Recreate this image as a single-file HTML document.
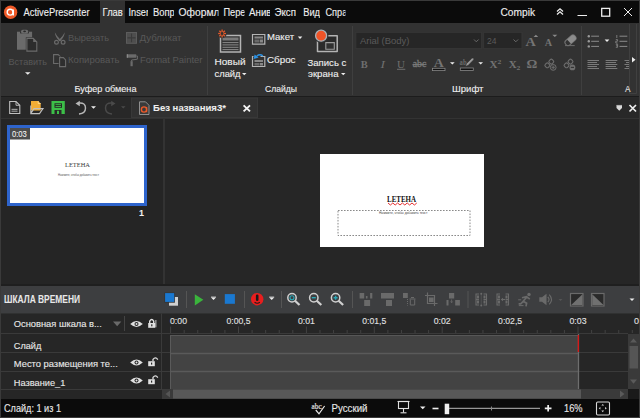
<!DOCTYPE html>
<html><head><meta charset="utf-8">
<style>
*{margin:0;padding:0}
html,body{width:640px;height:418px;overflow:hidden;background:#3a3a3a}
svg{display:block;font-family:"Liberation Sans",sans-serif}
</style></head><body>
<svg width="640" height="418" viewBox="0 0 640 418">
<rect x="0" y="0" width="640" height="418" fill="#3a3a3a" />
<rect x="1" y="1" width="638" height="22" fill="#0b0b0b" />
<rect x="100" y="1" width="25" height="22" fill="#323232" />
<circle cx="10.6" cy="12.3" r="6.7" fill="#ef5a29"/>
<circle cx="10.1" cy="12.2" r="2.9" fill="none" stroke="#fff" stroke-width="1.4"/>
<line x1="13.3" y1="9.5" x2="13.3" y2="15.6" stroke="#fff" stroke-width="1.4" />
<text x="23.5" y="16.0" font-size="10" fill="#eeeeee" textLength="66" lengthAdjust="spacingAndGlyphs" stroke="#eeeeee" stroke-width="0.12" >ActivePresenter</text>
<clipPath id="c1"><rect x="101" y="1" width="23" height="22"/></clipPath>
<text x="102.6" y="16.0" font-size="10" fill="#eeeeee" textLength="20.2" lengthAdjust="spacingAndGlyphs" stroke="#eeeeee" stroke-width="0.12" clip-path="url(#c1)">Глав</text>
<clipPath id="ct0"><rect x="127.5" y="1" width="20.5" height="22"/></clipPath>
<text x="128.5" y="16.0" font-size="10" fill="#eeeeee" textLength="20.5" lengthAdjust="spacingAndGlyphs" stroke="#eeeeee" stroke-width="0.12" clip-path="url(#ct0)">Inser</text>
<clipPath id="ct1"><rect x="152" y="1" width="22" height="22"/></clipPath>
<text x="153" y="16.0" font-size="10" fill="#eeeeee" textLength="21.8" lengthAdjust="spacingAndGlyphs" stroke="#eeeeee" stroke-width="0.12" clip-path="url(#ct1)">Вопр</text>
<clipPath id="ct2"><rect x="177.5" y="1" width="41.0" height="22"/></clipPath>
<text x="178.5" y="16.0" font-size="10" fill="#eeeeee" textLength="41" lengthAdjust="spacingAndGlyphs" stroke="#eeeeee" stroke-width="0.12" clip-path="url(#ct2)">Оформл</text>
<clipPath id="ct3"><rect x="222.5" y="1" width="22.0" height="22"/></clipPath>
<text x="223.5" y="16.0" font-size="10" fill="#eeeeee" textLength="22" lengthAdjust="spacingAndGlyphs" stroke="#eeeeee" stroke-width="0.12" clip-path="url(#ct3)">Пере</text>
<clipPath id="ct4"><rect x="248" y="1" width="22" height="22"/></clipPath>
<text x="249" y="16.0" font-size="10" fill="#eeeeee" textLength="22.5" lengthAdjust="spacingAndGlyphs" stroke="#eeeeee" stroke-width="0.12" clip-path="url(#ct4)">Анив</text>
<clipPath id="ct5"><rect x="273.5" y="1" width="22.5" height="22"/></clipPath>
<text x="274.5" y="16.0" font-size="10" fill="#eeeeee" textLength="21.5" lengthAdjust="spacingAndGlyphs" stroke="#eeeeee" stroke-width="0.12" clip-path="url(#ct5)">Эксп</text>
<clipPath id="ct6"><rect x="302.2" y="1" width="17.80000000000001" height="22"/></clipPath>
<text x="303.2" y="16.0" font-size="10" fill="#eeeeee" textLength="16.8" lengthAdjust="spacingAndGlyphs" stroke="#eeeeee" stroke-width="0.12" clip-path="url(#ct6)">Вид</text>
<clipPath id="ct7"><rect x="324.5" y="1" width="21.0" height="22"/></clipPath>
<text x="325.5" y="16.0" font-size="10" fill="#eeeeee" textLength="21.8" lengthAdjust="spacingAndGlyphs" stroke="#eeeeee" stroke-width="0.12" clip-path="url(#ct7)">Спра</text>
<text x="500.5" y="16.0" font-size="10" fill="#eeeeee" textLength="34.5" lengthAdjust="spacingAndGlyphs" stroke="#eeeeee" stroke-width="0.12" >Compik</text>
<path d="M557 11.6 L560 8.8 L563 11.6 M557 14.6 L560 11.8 L563 14.6" fill="none" stroke="#eeeeee" stroke-width="1.3" />
<line x1="577.5" y1="15.5" x2="587" y2="15.5" stroke="#eeeeee" stroke-width="1" />
<rect x="601.7" y="8.4" width="8" height="7.8" fill="none" stroke="#eeeeee" stroke-width="1.3"/>
<path d="M624 8 L632 16 M632 8 L624 16" fill="none" stroke="#eeeeee" stroke-width="1" />
<rect x="1" y="23" width="638" height="74" fill="#323232" />
<rect x="17" y="31.7" width="15.1" height="18" fill="#6b6b6b" />
<rect x="20" y="31.2" width="9" height="2.2" fill="#323232" />
<rect x="21" y="29.8" width="7.2" height="3.8" fill="#6b6b6b" rx="1.8"/>
<ellipse cx="24.6" cy="31.4" rx="1.4" ry="0.8" fill="#2a2a2a"/>
<path d="M25.8 37.3 H33.6 L37.8 41.5 V52.2 H25.8 Z" fill="#323232" stroke="none" stroke-width="1" />
<path d="M26.9 38.4 H33.2 L36.8 42 V51.1 H26.9 Z" fill="#2c2c2c" stroke="#6b6b6b" stroke-width="1.1" />
<path d="M33.2 38.4 V42 H36.8 Z" fill="#6b6b6b" stroke="none" stroke-width="1" />
<text x="8.5" y="64.6" font-size="9.6" fill="#585858" textLength="38.5" lengthAdjust="spacingAndGlyphs" >Вставить</text>
<path d="M25 72.2 H30.5 L27.75 74.8 Z" fill="#eeeeee" stroke="none" stroke-width="1" />
<path d="M54.8 32.3 Q56.8 36.5 61 40.3 L59.6 41.2 Q55.3 37.5 54.8 32.3 Z" fill="#6b6b6b" stroke="none" stroke-width="1" />
<path d="M64.8 32.3 Q62.8 36.5 58.6 40.3 L60 41.2 Q64.3 37.5 64.8 32.3 Z" fill="#6b6b6b" stroke="none" stroke-width="1" />
<circle cx="56.5" cy="42.2" r="1.9" fill="none" stroke="#6b6b6b" stroke-width="1.2"/>
<circle cx="63.1" cy="42.2" r="1.9" fill="none" stroke="#6b6b6b" stroke-width="1.2"/>
<text x="68" y="41.0" font-size="9.6" fill="#585858" textLength="41" lengthAdjust="spacingAndGlyphs" >Вырезать</text>
<path d="M53.6 54.6 H58.2 L60.8 57.2 V63.5 H53.6 Z" fill="#323232" stroke="#6b6b6b" stroke-width="1.1" />
<path d="M58.6 56.6 H64.2 L66.4 59.4 V67.6 H58.6 Z" fill="#323232" stroke="none" stroke-width="1" />
<path d="M59.6 57.6 H63.4 L65.6 60 V66.6 H59.6 Z" fill="#2e2e2e" stroke="#6b6b6b" stroke-width="1.1" />
<text x="68" y="63.2" font-size="9.6" fill="#585858" textLength="51.5" lengthAdjust="spacingAndGlyphs" >Копировать</text>
<rect x="126.5" y="32.5" width="10" height="10.8" fill="#4e4e4e" stroke="#5c5c5c" stroke-width="1"/>
<path d="M131.5 33.5 V42.3 M127.5 37.9 H135.5" fill="none" stroke="#3a3a3a" stroke-width="1.1" />
<text x="139.5" y="40.9" font-size="9.6" fill="#585858" textLength="42" lengthAdjust="spacingAndGlyphs" >Дубликат</text>
<rect x="126.8" y="54.3" width="9.4" height="3.4" fill="#6b6b6b" />
<rect x="126.8" y="54.3" width="1.2" height="3.4" fill="#8a8a8a" />
<path d="M136.2 56 H137.4 V59.2 L131.6 60 V61.5" fill="none" stroke="#6b6b6b" stroke-width="1" />
<rect x="130.5" y="61.2" width="2.2" height="5" fill="#6b6b6b" />
<text x="140" y="63.4" font-size="9.6" fill="#585858" textLength="62.5" lengthAdjust="spacingAndGlyphs" >Format Painter</text>
<text x="74.5" y="92.1" font-size="9.6" fill="#eeeeee" textLength="62" lengthAdjust="spacingAndGlyphs" stroke="#eeeeee" stroke-width="0.12" >Буфер обмена</text>
<line x1="207.5" y1="26" x2="207.5" y2="95" stroke="#3f3f3f" stroke-width="1" />
<line x1="352.5" y1="26" x2="352.5" y2="95" stroke="#3f3f3f" stroke-width="1" />
<line x1="581.5" y1="26" x2="581.5" y2="95" stroke="#3f3f3f" stroke-width="1" />
<path d="M220.5 35.5 H240.5 V52 H220.5 Z" fill="#323232" stroke="#b4b4b4" stroke-width="1.5" />
<rect x="222.5" y="37.5" width="16" height="3" fill="#7a7a7a" />
<line x1="222.5" y1="42.6" x2="238.5" y2="42.6" stroke="#8a8a8a" stroke-width="1" />
<line x1="222.5" y1="44.9" x2="238.5" y2="44.9" stroke="#8a8a8a" stroke-width="1" />
<line x1="222.5" y1="47.3" x2="238.5" y2="47.3" stroke="#8a8a8a" stroke-width="1" />
<line x1="222.5" y1="49.6" x2="238.5" y2="49.6" stroke="#8a8a8a" stroke-width="1" />
<circle cx="222.1" cy="33.5" r="4.6" fill="#323232"/>
<line x1="223.5" y1="33.5" x2="226.0" y2="33.5" stroke="#e45a2b" stroke-width="1.3" />
<line x1="223.09" y1="34.49" x2="224.86" y2="36.26" stroke="#e45a2b" stroke-width="1.3" />
<line x1="222.1" y1="34.9" x2="222.1" y2="37.4" stroke="#e45a2b" stroke-width="1.3" />
<line x1="221.11" y1="34.49" x2="219.34" y2="36.26" stroke="#e45a2b" stroke-width="1.3" />
<line x1="220.7" y1="33.5" x2="218.2" y2="33.5" stroke="#e45a2b" stroke-width="1.3" />
<line x1="221.11" y1="32.51" x2="219.34" y2="30.74" stroke="#e45a2b" stroke-width="1.3" />
<line x1="222.1" y1="32.1" x2="222.1" y2="29.6" stroke="#e45a2b" stroke-width="1.3" />
<line x1="223.09" y1="32.51" x2="224.86" y2="30.74" stroke="#e45a2b" stroke-width="1.3" />
<text x="214.5" y="65.4" font-size="9.6" fill="#eeeeee" textLength="31" lengthAdjust="spacingAndGlyphs" stroke="#eeeeee" stroke-width="0.12" >Новый</text>
<text x="214.5" y="76.7" font-size="9.6" fill="#eeeeee" textLength="26" lengthAdjust="spacingAndGlyphs" stroke="#eeeeee" stroke-width="0.12" >слайд</text>
<path d="M242 73 H246.5 L244.25 75.2 Z" fill="#eeeeee" stroke="none" stroke-width="1" />
<path d="M252.5 34.5 H264.8 V44.2 H252.5 Z" fill="#323232" stroke="#b4b4b4" stroke-width="1.2" />
<rect x="254.5" y="36.5" width="8.5" height="2" fill="#888" />
<rect x="254.5" y="39.5" width="5" height="3" fill="#6a6a6a" />
<rect x="260" y="39.5" width="3" height="3" fill="#888" />
<text x="267" y="40.3" font-size="9.6" fill="#eeeeee" textLength="27" lengthAdjust="spacingAndGlyphs" stroke="#eeeeee" stroke-width="0.12" >Макет</text>
<path d="M297.8 36.6 H302.3 L300.05 38.9 Z" fill="#eeeeee" stroke="none" stroke-width="1" />
<path d="M252.5 56.5 H264.8 V66.5 H252.5 Z" fill="#323232" stroke="#b4b4b4" stroke-width="1.2" />
<rect x="254.5" y="60" width="8.5" height="2" fill="#888" />
<rect x="254.5" y="63" width="5" height="2.5" fill="#6a6a6a" />
<rect x="260" y="63" width="3" height="2.5" fill="#888" />
<line x1="253.5" y1="56.5" x2="260.5" y2="56.5" stroke="#323232" stroke-width="2" />
<path d="M262.8 55.8 Q260 53.6 256.8 56" fill="none" stroke="#2b93e6" stroke-width="1.5" />
<path d="M253.6 59 L254.6 54.6 L258.6 57.6 Z" fill="#2b93e6" stroke="none" stroke-width="1" />
<text x="267" y="63.4" font-size="9.6" fill="#eeeeee" textLength="28.5" lengthAdjust="spacingAndGlyphs" stroke="#eeeeee" stroke-width="0.12" >Сброс</text>
<text x="265" y="91.9" font-size="9.6" fill="#eeeeee" textLength="32" lengthAdjust="spacingAndGlyphs" stroke="#eeeeee" stroke-width="0.12" >Слайды</text>
<path d="M317.5 35.8 H337.2 V51.5 H317.5 Z" fill="#2a2a2a" stroke="#b4b4b4" stroke-width="1.5" stroke-linejoin="round"/>
<path d="M325.8 42.6 H334.3 V49.2 H325.8 Z" fill="#303030" stroke="#9a9a9a" stroke-width="1.1" />
<circle cx="321.1" cy="35.7" r="7.3" fill="#323232"/>
<circle cx="321.1" cy="35.7" r="5.5" fill="#ef5428" stroke="#a8b4ba" stroke-width="1.3"/>
<text x="307.5" y="65.7" font-size="9.6" fill="#eeeeee" textLength="38.8" lengthAdjust="spacingAndGlyphs" stroke="#eeeeee" stroke-width="0.12" >Запись с</text>
<text x="308" y="76.7" font-size="9.6" fill="#eeeeee" textLength="30.5" lengthAdjust="spacingAndGlyphs" stroke="#eeeeee" stroke-width="0.12" >экрана</text>
<path d="M341 73 H345.5 L343.25 75.2 Z" fill="#eeeeee" stroke="none" stroke-width="1" />
<rect x="355.8" y="32.3" width="125.8" height="16.3" fill="#262626" stroke="#363636" stroke-width="1"/>
<text x="360" y="43.7" font-size="9.6" fill="#5a5a5a" textLength="49.5" lengthAdjust="spacingAndGlyphs" >Arial (Body)</text>
<path d="M474 39.5 L476.3 41.8 L478.6 39.5" fill="none" stroke="#6a6a6a" stroke-width="1" />
<rect x="483.6" y="32.3" width="38.4" height="16.3" fill="#262626" stroke="#363636" stroke-width="1"/>
<text x="487" y="43.7" font-size="9.6" fill="#5a5a5a" textLength="9.5" lengthAdjust="spacingAndGlyphs" >24</text>
<path d="M513.5 39.5 L515.8 41.8 L518.1 39.5" fill="none" stroke="#6a6a6a" stroke-width="1" />
<text x="525.4" y="45.8" font-size="12.5" fill="#747474" font-weight="700" font-family="Liberation Serif" textLength="10.3" lengthAdjust="spacingAndGlyphs" >A</text>
<path d="M533.6 37.1 L535.9 34.8 L538.2 37.1 Z" fill="#8a8a8a" stroke="none" stroke-width="1" />
<text x="544.8" y="45.8" font-size="9.5" fill="#747474" font-weight="700" font-family="Liberation Serif" textLength="7.4" lengthAdjust="spacingAndGlyphs" >A</text>
<path d="M552.3 34.7 H557.3 L554.8 37.1 Z" fill="#8a8a8a" stroke="none" stroke-width="1" />
<g transform="rotate(-42 570.5 40.3)"><rect x="564.3" y="37.3" width="12.4" height="6" rx="2.6" fill="none" stroke="#6e6e6e" stroke-width="1.1"/><path d="M568.5 37.3 H574.1 Q576.7 37.3 576.7 40.3 Q576.7 43.3 574.1 43.3 H568.5 Z" fill="#8c8c8c"/></g>
<line x1="565" y1="45.6" x2="574.7" y2="45.6" stroke="#6e6e6e" stroke-width="1" />
<text x="360.8" y="67.8" font-size="10" fill="#6e6e6e" font-weight="700" font-family="Liberation Serif" textLength="7" lengthAdjust="spacingAndGlyphs" >B</text>
<text x="380.5" y="67.8" font-size="10" fill="#6e6e6e" font-family="Liberation Serif" textLength="4.5" lengthAdjust="spacingAndGlyphs" font-style="italic">I</text>
<text x="397" y="67.5" font-size="10" fill="#6e6e6e" font-family="Liberation Serif" textLength="8" lengthAdjust="spacingAndGlyphs" >U</text>
<line x1="397" y1="69.3" x2="405.3" y2="69.3" stroke="#6e6e6e" stroke-width="1" />
<text x="412.8" y="67.4" font-size="9.5" fill="#7a7a7a" font-family="Liberation Serif" textLength="13.5" lengthAdjust="spacingAndGlyphs" stroke="#7a7a7a" stroke-width="0.3">abc</text>
<line x1="412.5" y1="64.6" x2="426.5" y2="64.6" stroke="#7a7a7a" stroke-width="1.1" />
<text x="433.8" y="66.8" font-size="12.5" fill="#747474" font-weight="700" font-family="Liberation Serif" textLength="10" lengthAdjust="spacingAndGlyphs" >A</text>
<rect x="432.5" y="68.3" width="12.5" height="2.3" fill="#111" stroke="#888" stroke-width="0.8"/>
<path d="M450 62.2 H454.7 L452.35 64.5 Z" fill="#eeeeee" stroke="none" stroke-width="1" />
<text x="459.6" y="64.8" font-size="8" fill="#6a6a6a" font-weight="700" font-family="Liberation Serif" textLength="7" lengthAdjust="spacingAndGlyphs" >ab</text>
<path d="M465.5 66.5 L466.3 63.8 L471.8 58.3 Q472.8 57.5 473.6 58.3 Q474.3 59.1 473.5 60 L468 65.6 Z" fill="#9a9a9a" stroke="#2a2a2a" stroke-width="0.6" />
<rect x="460.3" y="68" width="13" height="2.5" fill="#111" stroke="#888" stroke-width="0.8"/>
<path d="M478.4 62.2 H483 L480.7 64.5 Z" fill="#eeeeee" stroke="none" stroke-width="1" />
<text x="489.5" y="68" font-size="10.5" fill="#727272" font-weight="700" font-family="Liberation Serif" textLength="8" lengthAdjust="spacingAndGlyphs" >X</text>
<text x="497.6" y="63.6" font-size="6.5" fill="#727272" font-weight="700" font-family="Liberation Serif" textLength="3.8" lengthAdjust="spacingAndGlyphs" >2</text>
<text x="508.8" y="68" font-size="10.5" fill="#727272" font-weight="700" font-family="Liberation Serif" textLength="8" lengthAdjust="spacingAndGlyphs" >X</text>
<text x="516.4" y="70.3" font-size="6.5" fill="#727272" font-weight="700" font-family="Liberation Serif" textLength="3.8" lengthAdjust="spacingAndGlyphs" >2</text>
<text x="526.5" y="68" font-size="11.5" fill="#727272" font-weight="700" font-family="Liberation Serif" textLength="10.8" lengthAdjust="spacingAndGlyphs" >Ω</text>
<rect x="549.1999999999999" y="59.5" width="4.2" height="4.2" rx="1.4" transform="rotate(45 551.3 61.6)" fill="none" stroke="#6e6e6e" stroke-width="1.1"/>
<rect x="545.1999999999999" y="63.199999999999996" width="4.2" height="4.2" rx="1.4" transform="rotate(45 547.3 65.3)" fill="none" stroke="#6e6e6e" stroke-width="1.1"/>
<circle cx="553.2" cy="67.4" r="2.9" fill="#383838" stroke="#6e6e6e" stroke-width="1"/>
<path d="M551.6 67.4 H554.8 M553.2 65.8 V69" fill="none" stroke="#6e6e6e" stroke-width="0.9" />
<rect x="568.4" y="59.5" width="4.2" height="4.2" rx="1.4" transform="rotate(45 570.5 61.6)" fill="none" stroke="#6e6e6e" stroke-width="1.1"/>
<rect x="564.4" y="63.199999999999996" width="4.2" height="4.2" rx="1.4" transform="rotate(45 566.5 65.3)" fill="none" stroke="#6e6e6e" stroke-width="1.1"/>
<circle cx="572.4000000000001" cy="67.4" r="2.9" fill="#6e6e6e"/>
<line x1="570.8000000000001" y1="67.4" x2="574.0" y2="67.4" stroke="#333" stroke-width="1.1" />
<text x="452" y="91.9" font-size="9.6" fill="#eeeeee" textLength="31.5" lengthAdjust="spacingAndGlyphs" stroke="#eeeeee" stroke-width="0.12" >Шрифт</text>
<circle cx="588.8" cy="36.2" r="1.2" fill="#9a9a9a"/>
<line x1="591.2" y1="36.2" x2="599" y2="36.2" stroke="#8a8a8a" stroke-width="1" />
<circle cx="588.8" cy="41.3" r="1.2" fill="#9a9a9a"/>
<line x1="591.2" y1="41.3" x2="599" y2="41.3" stroke="#8a8a8a" stroke-width="1" />
<circle cx="588.8" cy="46.4" r="1.2" fill="#9a9a9a"/>
<line x1="591.2" y1="46.4" x2="599" y2="46.4" stroke="#8a8a8a" stroke-width="1" />
<path d="M604.6 39.6 H609.4 L607 42 Z" fill="#eeeeee" stroke="none" stroke-width="1" />
<line x1="619.5" y1="36.2" x2="627.3" y2="36.2" stroke="#8a8a8a" stroke-width="1" />
<line x1="619.5" y1="41.3" x2="627.3" y2="41.3" stroke="#8a8a8a" stroke-width="1" />
<line x1="619.5" y1="46.4" x2="627.3" y2="46.4" stroke="#8a8a8a" stroke-width="1" />
<path d="M616.8 35 V38 M615.8 39.6 H617.6 V41.2 H615.8 V43 H617.6 M615.8 44.3 H617.6 V47.3 H615.8 M616 45.8 H617.6" fill="none" stroke="#8a8a8a" stroke-width="0.8" />
<line x1="587.5" y1="60.5" x2="599" y2="60.5" stroke="#7a7a7a" stroke-width="1" />
<line x1="605.6" y1="60.5" x2="617.3" y2="60.5" stroke="#7a7a7a" stroke-width="1" />
<line x1="624.5" y1="60.5" x2="629" y2="60.5" stroke="#7a7a7a" stroke-width="1" />
<line x1="587.5" y1="62.5" x2="597" y2="62.5" stroke="#7a7a7a" stroke-width="1" />
<line x1="605.6" y1="62.5" x2="616" y2="62.5" stroke="#7a7a7a" stroke-width="1" />
<line x1="626" y1="62.5" x2="629" y2="62.5" stroke="#7a7a7a" stroke-width="1" />
<line x1="587.5" y1="64.5" x2="599" y2="64.5" stroke="#7a7a7a" stroke-width="1" />
<line x1="605.6" y1="64.5" x2="617.3" y2="64.5" stroke="#7a7a7a" stroke-width="1" />
<line x1="624.5" y1="64.5" x2="629" y2="64.5" stroke="#7a7a7a" stroke-width="1" />
<line x1="587.5" y1="66.5" x2="597" y2="66.5" stroke="#7a7a7a" stroke-width="1" />
<line x1="605.6" y1="66.5" x2="616" y2="66.5" stroke="#7a7a7a" stroke-width="1" />
<line x1="626" y1="66.5" x2="629" y2="66.5" stroke="#7a7a7a" stroke-width="1" />
<line x1="587.5" y1="68.5" x2="599" y2="68.5" stroke="#7a7a7a" stroke-width="1" />
<line x1="605.6" y1="68.5" x2="617.3" y2="68.5" stroke="#7a7a7a" stroke-width="1" />
<line x1="624.5" y1="68.5" x2="629" y2="68.5" stroke="#7a7a7a" stroke-width="1" />
<path d="M629.5 24 V93.5 H636.5 V24" fill="none" stroke="#404040" stroke-width="1" />
<path d="M632 57 L635.5 59.7 L632 62.4 Z" fill="#eeeeee" stroke="none" stroke-width="1" />
<text x="625" y="91.9" font-size="9.5" fill="#e0e0e0" textLength="5.5" lengthAdjust="spacingAndGlyphs" stroke="#e0e0e0" stroke-width="0.12" >A</text>
<rect x="1" y="96" width="638" height="1.5" fill="#1c1c1c" />
<rect x="1" y="97.5" width="638" height="21" fill="#282828" />
<rect x="131.5" y="98" width="126" height="19.5" fill="#313131" stroke="#383838" stroke-width="1"/>
<line x1="1" y1="118.5" x2="639" y2="118.5" stroke="#333333" stroke-width="1" />
<path d="M9.7 101.5 H16 L19.8 105.3 V113.5 H9.7 Z" fill="none" stroke="#c0c0c0" stroke-width="1.1" />
<path d="M16 101.5 V105.3 H19.8" fill="none" stroke="#c0c0c0" stroke-width="0.9" />
<rect x="11.5" y="108.8" width="6" height="1.2" fill="#9a9a9a" />
<rect x="11.5" y="110.6" width="6" height="1.2" fill="#9a9a9a" />
<path d="M31 101 H38.2 L40.7 103.5 V110.5 H31 Z" fill="#f2ad35" stroke="none" stroke-width="1" />
<path d="M38.2 101 V103.5 H40.7" fill="none" stroke="#ffe0a0" stroke-width="0.8" />
<path d="M30.8 105.5 V113.6 H39.5 L43 108.6 H34 L30.8 113.4" fill="none" stroke="#c0c0c0" stroke-width="1.1" />
<rect x="51.5" y="101" width="13.3" height="13" fill="#3cbf48" />
<rect x="54.5" y="103.3" width="7.5" height="4.5" fill="#282828" />
<line x1="55.5" y1="104.6" x2="61" y2="104.6" stroke="#3cbf48" stroke-width="0.9" />
<line x1="55.5" y1="106.5" x2="61" y2="106.5" stroke="#3cbf48" stroke-width="0.9" />
<rect x="54.5" y="110" width="7" height="4" fill="#282828" />
<rect x="57" y="110.8" width="2" height="3.2" fill="#3cbf48" />
<path d="M79 103 Q85.5 102.5 85.5 108 Q85.5 113.5 79 114" fill="none" stroke="#b8b8b8" stroke-width="1.4" />
<path d="M75.5 103.5 L79.8 100.8 L79.8 106.2 Z" fill="#b8b8b8" stroke="none" stroke-width="1" />
<path d="M91 106.2 H96 L93.5 108.7 Z" fill="#eeeeee" stroke="none" stroke-width="1" />
<path d="M112 103 Q105.5 102.5 105.5 108 Q105.5 113.5 112 114" fill="none" stroke="#4a4a4a" stroke-width="1.4" />
<path d="M115.5 103.5 L111.2 100.8 L111.2 106.2 Z" fill="#4a4a4a" stroke="none" stroke-width="1" />
<path d="M121 106.2 H125.5 L123.25 108.5 Z" fill="#4a4a4a" stroke="none" stroke-width="1" />
<path d="M139.5 101.8 H145.5 L149 105.3 V114.5 H139.5 Z" fill="#3a3a3a" stroke="#9a9a9a" stroke-width="0.9" />
<circle cx="144" cy="109.5" r="2.6" fill="none" stroke="#ef5a29" stroke-width="1.4"/>
<line x1="146.6" y1="107" x2="146.6" y2="112.2" stroke="#ef5a29" stroke-width="1.3" />
<text x="153" y="111.2" font-size="9.6" fill="#eeeeee" font-weight="700" textLength="73" lengthAdjust="spacingAndGlyphs" stroke="#eeeeee" stroke-width="0.05" >Без названия3*</text>
<path d="M243.6 105.4 L250 111.4 M250 105.4 L243.6 111.4" fill="none" stroke="#f4f4f4" stroke-width="1.9" />
<path d="M616.5 105 H622 V108 L619.25 110.8 L616.5 108 Z" fill="#d8d8d8" stroke="none" stroke-width="1" />
<line x1="616.5" y1="105.3" x2="622" y2="105.3" stroke="#888" stroke-width="0.6" />
<path d="M629.5 105 L636 111.5 M636 105 L629.5 111.5" fill="none" stroke="#eeeeee" stroke-width="1.7" />
<rect x="1" y="119" width="162" height="165" fill="#252525" />
<rect x="164" y="119" width="475" height="165" fill="#262626" />
<rect x="163" y="119" width="2" height="165" fill="#333333" />
<rect x="8.5" y="126.5" width="137" height="78" fill="#ffffff" stroke="#2e64cc" stroke-width="3"/>
<rect x="10" y="128" width="20" height="11.5" fill="#4c4c4c" />
<text x="12" y="136.5" font-size="9" fill="#f0f0f0" textLength="14.8" lengthAdjust="spacingAndGlyphs" stroke="#f0f0f0" stroke-width="0.1" >0:03</text>
<text x="65" y="167.2" font-size="5.5" fill="#3a3a3a" font-family="Liberation Serif" textLength="25" lengthAdjust="spacingAndGlyphs" >LETEHA</text>
<text x="58" y="176.2" font-size="2.7" fill="#555" textLength="41" lengthAdjust="spacingAndGlyphs" >Нажмите, чтобы добавить текст</text>
<text x="139" y="215.5" font-size="9" fill="#f0f0f0" font-weight="700" textLength="5" lengthAdjust="spacingAndGlyphs" stroke="#f0f0f0" stroke-width="0.05" >1</text>
<rect x="320" y="154" width="164" height="93" fill="#ffffff" />
<rect x="338" y="210.5" width="132" height="25" fill="none" stroke="#8a8a8a" stroke-width="1" stroke-dasharray="1.6,1.4"/>
<text x="387" y="201.7" font-size="7.5" fill="#111" font-weight="700" font-family="Liberation Serif" textLength="29" lengthAdjust="spacingAndGlyphs" >LETEHA</text>
<path d="M388 203 L390.4 205 L392.8 203 L395.2 205 L397.6 203 L400.0 205 L402.4 203 L404.8 205 L407.2 203 L409.6 205 L412.0 203 L414.4 205 L416.8 203" fill="none" stroke="#e53030" stroke-width="1" />
<text x="379" y="214.0" font-size="3.6" fill="#444" textLength="48.5" lengthAdjust="spacingAndGlyphs" >Нажмите, чтобы добавить текст</text>
<rect x="1" y="284" width="638" height="2" fill="#1f1f1f" />
<rect x="1" y="286" width="638" height="27.5" fill="#3d3e40" />
<text x="4" y="302.9" font-size="10" fill="#e8e8e8" font-weight="700" textLength="76" lengthAdjust="spacingAndGlyphs" stroke="#e8e8e8" stroke-width="0.05" >ШКАЛА ВРЕМЕНИ</text>
<rect x="169" y="297" width="9" height="8.7" fill="#d0d0d0" />
<rect x="164.4" y="292.5" width="10.5" height="10.2" fill="#333436" />
<rect x="165.1" y="293.1" width="9.1" height="8.8" fill="#1a78d0" />
<line x1="186.5" y1="291" x2="186.5" y2="308" stroke="#555" stroke-width="1" />
<path d="M194.8 294.2 L203.4 299.8 L194.8 305.4 Z" fill="#3ab43c" stroke="none" stroke-width="1" />
<path d="M210.8 297.2 H216.2 L213.5 299.9 Z" fill="#eeeeee" stroke="none" stroke-width="1" />
<line x1="211" y1="296.9" x2="216" y2="296.9" stroke="#bbbbbb" stroke-width="0.8" />
<rect x="224.8" y="294.1" width="10.1" height="9.7" fill="#1a78d0" />
<line x1="244.5" y1="291" x2="244.5" y2="308" stroke="#555" stroke-width="1" />
<circle cx="257.2" cy="299.2" r="6.2" fill="#e81e1e"/>
<rect x="255.9" y="294.4" width="2.6" height="6.6" fill="#1a1a1a" rx="1.3"/>
<path d="M254.6 302.2 Q257.2 304.2 259.8 302.2" fill="none" stroke="#1a1a1a" stroke-width="1.1" />
<path d="M269 297.2 H274.4 L271.7 299.9 Z" fill="#eeeeee" stroke="none" stroke-width="1" />
<line x1="269.2" y1="296.9" x2="274.2" y2="296.9" stroke="#bbbbbb" stroke-width="0.8" />
<line x1="281.5" y1="291" x2="281.5" y2="308" stroke="#555" stroke-width="1" />
<circle cx="292" cy="297.7" r="4.2" fill="none" stroke="#d0d0d0" stroke-width="1.5"/>
<path d="M295 300.7 L299.5 305.0" fill="none" stroke="#d0d0d0" stroke-width="2.2" />
<circle cx="292" cy="297.7" r="2" fill="none" stroke="#2aa8b8" stroke-width="1.1"/>
<circle cx="313.8" cy="297.7" r="4.2" fill="none" stroke="#d0d0d0" stroke-width="1.5"/>
<path d="M316.8 300.7 L321.3 305.0" fill="none" stroke="#d0d0d0" stroke-width="2.2" />
<line x1="311.8" y1="297.7" x2="315.8" y2="297.7" stroke="#2aa8b8" stroke-width="1.4" />
<circle cx="335.6" cy="297.7" r="4.2" fill="none" stroke="#d0d0d0" stroke-width="1.5"/>
<path d="M338.6 300.7 L343.1 305.0" fill="none" stroke="#d0d0d0" stroke-width="2.2" />
<path d="M333.6 297.7 H337.6 M335.6 295.7 V299.7" fill="none" stroke="#2aa8b8" stroke-width="1.4" />
<line x1="352.5" y1="291" x2="352.5" y2="308" stroke="#555" stroke-width="1" />
<rect x="359.6" y="293" width="4.6" height="5.5" fill="#6a6a6a" />
<rect x="365.9" y="296" width="1.6" height="2.5" fill="#6a6a6a" />
<rect x="370.1" y="293" width="2.2" height="5.5" fill="#6a6a6a" />
<rect x="364.2" y="300" width="5.9" height="6" fill="#6a6a6a" />
<rect x="381" y="293" width="13" height="5.5" fill="#6a6a6a" />
<rect x="386" y="300" width="6" height="6" fill="#6a6a6a" />
<rect x="403" y="293" width="4.8" height="5" fill="#6a6a6a" />
<line x1="407.5" y1="299" x2="407.5" y2="305.5" stroke="#6a6a6a" stroke-width="1" stroke-dasharray="1,1"/>
<path d="M409.5 299 H415.5 M410.3 299.5 V305 H414.7 V299.5 M411 297.5 H414" fill="none" stroke="#6a6a6a" stroke-width="1" />
<path d="M427.5 292.5 V303.5 H437.5 M425 295.5 H434.5 V306" fill="none" stroke="#6a6a6a" stroke-width="1.2" />
<rect x="429" y="297.5" width="4.6" height="4.6" fill="#6a6a6a" />
<rect x="449" y="293" width="5.2" height="5.5" fill="#6a6a6a" />
<rect x="446.5" y="300" width="2" height="5.5" fill="#6a6a6a" />
<rect x="455.2" y="300" width="4.7" height="5.5" fill="#6a6a6a" />
<path d="M451.6 299.5 V302.5 M450.6 301.5 L451.6 302.8 L452.6 301.5" fill="none" stroke="#6a6a6a" stroke-width="0.8" />
<line x1="468" y1="291" x2="468" y2="308" stroke="#555" stroke-width="1" />
<path d="M476 293.5 V305.5 M476 294 H479 M476 299.5 H479 M476 305 H479 M486.5 293.5 V305.5 M486.5 294 H483.5 M486.5 299.5 H483.5 M486.5 305 H483.5" fill="none" stroke="#6a6a6a" stroke-width="1.1" />
<rect x="477" y="295.5" width="2" height="3" fill="#6a6a6a" />
<rect x="477" y="300.5" width="2" height="3" fill="#6a6a6a" />
<rect x="483.5" y="295.5" width="2" height="3" fill="#6a6a6a" />
<rect x="483.5" y="300.5" width="2" height="3" fill="#6a6a6a" />
<line x1="481.25" y1="294.5" x2="481.25" y2="305" stroke="#6a6a6a" stroke-width="0.9" stroke-dasharray="1,1"/>
<circle cx="481.25" cy="293.8" r="1" fill="#6a6a6a"/>
<circle cx="481.25" cy="305.6" r="1" fill="#6a6a6a"/>
<path d="M497 293.5 V305.5 M497 294 H500 M497 299.5 H500 M497 305 H500 M508.5 293.5 V305.5 M508.5 294 H505.5 M508.5 299.5 H505.5 M508.5 305 H505.5" fill="none" stroke="#6a6a6a" stroke-width="1.1" />
<rect x="498" y="295.5" width="2" height="3" fill="#6a6a6a" />
<rect x="498" y="300.5" width="2" height="3" fill="#6a6a6a" />
<rect x="505.5" y="295.5" width="2" height="3" fill="#6a6a6a" />
<rect x="505.5" y="300.5" width="2" height="3" fill="#6a6a6a" />
<path d="M505 299.5 H501.5" fill="none" stroke="#6a6a6a" stroke-width="1.1" />
<path d="M500.8 299.5 L503 297.8 V301.2 Z" fill="#6a6a6a" stroke="none" stroke-width="1" />
<circle cx="529" cy="294.5" r="1.7" fill="#6a6a6a"/>
<path d="M522 297.8 L526.5 296.6 L529.8 299.2 M526.8 297 L523.2 301.3 L526.6 303.3 L526 306.3 M523.2 301.3 L520.7 303.8 H518.6" fill="none" stroke="#6a6a6a" stroke-width="1.7" />
<path d="M518.2 299.8 H521.2 M518.8 305.6 H523.5" fill="none" stroke="#6a6a6a" stroke-width="1" />
<path d="M539.3 297.3 H542 L546.5 293.8 V305.2 L542 301.7 H539.3 Z" fill="#6a6a6a" stroke="none" stroke-width="1" />
<path d="M547.8 296.8 Q550.3 299.5 547.8 302.2 M549.3 294.6 Q553.6 299.5 549.3 304.4" fill="none" stroke="#6a6a6a" stroke-width="1.1" />
<path d="M558.5 299 H562.5 L560.5 301 Z" fill="#555" stroke="none" stroke-width="1" />
<rect x="570.5" y="293.5" width="12.5" height="12.5" fill="#2a2a2a" stroke="#6a6a6a" stroke-width="1.2"/>
<path d="M571.2 305 L582.5 294.2 V305 Z" fill="#707070" stroke="none" stroke-width="1" />
<rect x="591.5" y="293.5" width="12.5" height="12.5" fill="#2a2a2a" stroke="#6a6a6a" stroke-width="1.2"/>
<path d="M592.2 294.2 L603.5 305 H592.2 Z" fill="#707070" stroke="none" stroke-width="1" />
<path d="M629.5 298.5 H634.5 L632 301 Z" fill="#eeeeee" stroke="none" stroke-width="1" />
<rect x="1" y="313.5" width="638" height="85.5" fill="#262626" />
<line x1="161.5" y1="313.5" x2="161.5" y2="389" stroke="#3a3a3a" stroke-width="1" />
<line x1="1" y1="333.5" x2="628" y2="333.5" stroke="#3a3a3a" stroke-width="1" />
<line x1="1" y1="352.5" x2="628" y2="352.5" stroke="#3a3a3a" stroke-width="1" />
<line x1="1" y1="371.5" x2="628" y2="371.5" stroke="#3a3a3a" stroke-width="1" />
<line x1="1" y1="389.5" x2="628" y2="389.5" stroke="#3a3a3a" stroke-width="1" />
<text x="13.8" y="327.0" font-size="9.6" fill="#e8e8e8" textLength="88" lengthAdjust="spacingAndGlyphs" stroke="#e8e8e8" stroke-width="0.12" >Основная шкала в...</text>
<path d="M113 321.5 H121.3 L117.15 326.3 Z" fill="#6a6a6a" stroke="none" stroke-width="1" />
<line x1="124.5" y1="316" x2="124.5" y2="331" stroke="#444" stroke-width="1" />
<path d="M130.2 324.0 Q136.5 318.2 142.79999999999998 324.0 Q136.5 329.8 130.2 324.0 Z" fill="#e0e0e0" stroke="none" stroke-width="1" />
<circle cx="136.5" cy="324.0" r="2" fill="#262626"/>
<circle cx="136.5" cy="324.0" r="1" fill="#e0e0e0"/>
<rect x="155.0" y="320.0" width="1.6" height="7.3" fill="#8a8a8a" />
<rect x="148.2" y="323.0" width="7" height="4.8" fill="#e0e0e0" />
<path d="M149.7 323.0 V321.1 Q151.7 317.9 153.7 321.1 V323.0" fill="none" stroke="#e0e0e0" stroke-width="1.4" />
<rect x="151.2" y="324.3" width="1.2" height="2" fill="#262626" />
<text x="13.8" y="349.1" font-size="9.6" fill="#e8e8e8" textLength="27.5" lengthAdjust="spacingAndGlyphs" stroke="#e8e8e8" stroke-width="0.12" >Слайд</text>
<text x="13.8" y="367.3" font-size="9.6" fill="#e8e8e8" textLength="104" lengthAdjust="spacingAndGlyphs" stroke="#e8e8e8" stroke-width="0.12" >Место размещения те...</text>
<path d="M130.2 362.5 Q136.5 356.7 142.79999999999998 362.5 Q136.5 368.3 130.2 362.5 Z" fill="#e0e0e0" stroke="none" stroke-width="1" />
<circle cx="136.5" cy="362.5" r="2" fill="#262626"/>
<circle cx="136.5" cy="362.5" r="1" fill="#e0e0e0"/>
<rect x="148.2" y="361.2" width="6.6" height="5" fill="#e0e0e0" />
<path d="M153.0 361.2 V359.40000000000003 Q155.5 356.40000000000003 157.79999999999998 359.6" fill="none" stroke="#e0e0e0" stroke-width="1.3" />
<rect x="151.0" y="362.6" width="1.2" height="2" fill="#262626" />
<text x="13.8" y="385.5" font-size="9.6" fill="#e8e8e8" textLength="51.5" lengthAdjust="spacingAndGlyphs" stroke="#e8e8e8" stroke-width="0.12" >Название_1</text>
<path d="M130.2 380.5 Q136.5 374.7 142.79999999999998 380.5 Q136.5 386.3 130.2 380.5 Z" fill="#e0e0e0" stroke="none" stroke-width="1" />
<circle cx="136.5" cy="380.5" r="2" fill="#262626"/>
<circle cx="136.5" cy="380.5" r="1" fill="#e0e0e0"/>
<rect x="148.2" y="379.2" width="6.6" height="5" fill="#e0e0e0" />
<path d="M153.0 379.2 V377.40000000000003 Q155.5 374.40000000000003 157.79999999999998 377.6" fill="none" stroke="#e0e0e0" stroke-width="1.3" />
<rect x="151.0" y="380.6" width="1.2" height="2" fill="#262626" />
<line x1="170.6" y1="326.5" x2="170.6" y2="333" stroke="#424242" stroke-width="1" />
<line x1="184.18" y1="330" x2="184.18" y2="333" stroke="#424242" stroke-width="1" />
<line x1="197.76" y1="330" x2="197.76" y2="333" stroke="#424242" stroke-width="1" />
<line x1="211.34" y1="330" x2="211.34" y2="333" stroke="#424242" stroke-width="1" />
<line x1="224.92" y1="330" x2="224.92" y2="333" stroke="#424242" stroke-width="1" />
<line x1="238.5" y1="326.5" x2="238.5" y2="333" stroke="#424242" stroke-width="1" />
<line x1="252.08" y1="330" x2="252.08" y2="333" stroke="#424242" stroke-width="1" />
<line x1="265.66" y1="330" x2="265.66" y2="333" stroke="#424242" stroke-width="1" />
<line x1="279.24" y1="330" x2="279.24" y2="333" stroke="#424242" stroke-width="1" />
<line x1="292.82" y1="330" x2="292.82" y2="333" stroke="#424242" stroke-width="1" />
<line x1="306.4" y1="326.5" x2="306.4" y2="333" stroke="#424242" stroke-width="1" />
<line x1="319.98" y1="330" x2="319.98" y2="333" stroke="#424242" stroke-width="1" />
<line x1="333.56" y1="330" x2="333.56" y2="333" stroke="#424242" stroke-width="1" />
<line x1="347.14" y1="330" x2="347.14" y2="333" stroke="#424242" stroke-width="1" />
<line x1="360.72" y1="330" x2="360.72" y2="333" stroke="#424242" stroke-width="1" />
<line x1="374.3" y1="326.5" x2="374.3" y2="333" stroke="#424242" stroke-width="1" />
<line x1="387.88" y1="330" x2="387.88" y2="333" stroke="#424242" stroke-width="1" />
<line x1="401.46" y1="330" x2="401.46" y2="333" stroke="#424242" stroke-width="1" />
<line x1="415.04" y1="330" x2="415.04" y2="333" stroke="#424242" stroke-width="1" />
<line x1="428.62" y1="330" x2="428.62" y2="333" stroke="#424242" stroke-width="1" />
<line x1="442.2" y1="326.5" x2="442.2" y2="333" stroke="#424242" stroke-width="1" />
<line x1="455.78" y1="330" x2="455.78" y2="333" stroke="#424242" stroke-width="1" />
<line x1="469.36" y1="330" x2="469.36" y2="333" stroke="#424242" stroke-width="1" />
<line x1="482.94" y1="330" x2="482.94" y2="333" stroke="#424242" stroke-width="1" />
<line x1="496.52" y1="330" x2="496.52" y2="333" stroke="#424242" stroke-width="1" />
<line x1="510.1" y1="326.5" x2="510.1" y2="333" stroke="#424242" stroke-width="1" />
<line x1="523.68" y1="330" x2="523.68" y2="333" stroke="#424242" stroke-width="1" />
<line x1="537.26" y1="330" x2="537.26" y2="333" stroke="#424242" stroke-width="1" />
<line x1="550.84" y1="330" x2="550.84" y2="333" stroke="#424242" stroke-width="1" />
<line x1="564.42" y1="330" x2="564.42" y2="333" stroke="#424242" stroke-width="1" />
<line x1="578.0" y1="326.5" x2="578.0" y2="333" stroke="#424242" stroke-width="1" />
<line x1="591.58" y1="330" x2="591.58" y2="333" stroke="#424242" stroke-width="1" />
<line x1="605.16" y1="330" x2="605.16" y2="333" stroke="#424242" stroke-width="1" />
<line x1="618.74" y1="330" x2="618.74" y2="333" stroke="#424242" stroke-width="1" />
<line x1="632.32" y1="330" x2="632.32" y2="333" stroke="#424242" stroke-width="1" />
<text x="170" y="324.1" font-size="9.3" fill="#e0e0e0" textLength="17" lengthAdjust="spacingAndGlyphs" stroke="#e0e0e0" stroke-width="0.12" >0:00</text>
<text x="226.5" y="324.1" font-size="9.3" fill="#e0e0e0" textLength="24" lengthAdjust="spacingAndGlyphs" stroke="#e0e0e0" stroke-width="0.12" >0:00,5</text>
<text x="297.9" y="324.1" font-size="9.3" fill="#e0e0e0" textLength="17" lengthAdjust="spacingAndGlyphs" stroke="#e0e0e0" stroke-width="0.12" >0:01</text>
<text x="362.3" y="324.1" font-size="9.3" fill="#e0e0e0" textLength="24" lengthAdjust="spacingAndGlyphs" stroke="#e0e0e0" stroke-width="0.12" >0:01,5</text>
<text x="433.7" y="324.1" font-size="9.3" fill="#e0e0e0" textLength="17" lengthAdjust="spacingAndGlyphs" stroke="#e0e0e0" stroke-width="0.12" >0:02</text>
<text x="498.1" y="324.1" font-size="9.3" fill="#e0e0e0" textLength="24" lengthAdjust="spacingAndGlyphs" stroke="#e0e0e0" stroke-width="0.12" >0:02,5</text>
<text x="569.5" y="324.1" font-size="9.3" fill="#e0e0e0" textLength="17" lengthAdjust="spacingAndGlyphs" stroke="#e0e0e0" stroke-width="0.12" >0:03</text>
<text x="634" y="324.1" font-size="9.3" fill="#e0e0e0" textLength="5" lengthAdjust="spacingAndGlyphs" stroke="#e0e0e0" stroke-width="0.12" >0</text>
<rect x="170" y="335" width="408" height="54" fill="#434343" />
<line x1="170.5" y1="335" x2="170.5" y2="389" stroke="#5a5a5a" stroke-width="1" />
<line x1="170" y1="335.5" x2="578" y2="335.5" stroke="#575757" stroke-width="1" />
<line x1="170" y1="353.5" x2="578" y2="353.5" stroke="#5a5a5a" stroke-width="1.4" />
<line x1="170" y1="371.5" x2="578" y2="371.5" stroke="#5a5a5a" stroke-width="1.4" />
<line x1="578.5" y1="334" x2="578.5" y2="389" stroke="#6e6e6e" stroke-width="1.3" />
<line x1="578.3" y1="335" x2="578.3" y2="352" stroke="#e01010" stroke-width="1.2" />
<rect x="628" y="334" width="11" height="55" fill="#3a3a3a" />
<rect x="629.5" y="346" width="8.5" height="22.5" fill="#555" />
<path d="M630 342.5 L633.5 338.5 L637 342.5 Z" fill="#5a5a5a" stroke="none" stroke-width="1" />
<path d="M630 379.5 L633.5 383.8 L637 379.5 Z" fill="#5a5a5a" stroke="none" stroke-width="1" />
<rect x="162" y="389" width="466" height="10" fill="#3a3a3a" />
<rect x="173" y="389.5" width="408" height="9" fill="#585858" />
<path d="M170 390.5 L165.5 394 L170 397.5 Z" fill="#555" stroke="none" stroke-width="1" />
<path d="M620 390.5 L624.5 394 L620 397.5 Z" fill="#5a5a5a" stroke="none" stroke-width="1" />
<rect x="628" y="389" width="11" height="10" fill="#1a1a1a" />
<rect x="1" y="399" width="638" height="18" fill="#0b0b0b" />
<text x="4" y="411.9" font-size="10" fill="#e8e8e8" textLength="57" lengthAdjust="spacingAndGlyphs" stroke="#e8e8e8" stroke-width="0.12" >Слайд: 1 из 1</text>
<text x="311.6" y="408.6" font-size="7.5" fill="#e0e0e0" font-family="Liberation Serif" textLength="10" lengthAdjust="spacingAndGlyphs" stroke="#e0e0e0" stroke-width="0.2">abc</text>
<path d="M315.8 410 L319 413.8 L324.6 406" fill="none" stroke="#e8e8e8" stroke-width="1.2" />
<text x="331.5" y="412.3" font-size="10" fill="#e8e8e8" textLength="36" lengthAdjust="spacingAndGlyphs" stroke="#e8e8e8" stroke-width="0.12" >Русский</text>
<rect x="398.5" y="401.5" width="10" height="7" fill="none" stroke="#e0e0e0" stroke-width="1.1"/>
<line x1="397.5" y1="401.5" x2="409.5" y2="401.5" stroke="#e0e0e0" stroke-width="1.1" />
<line x1="403.5" y1="408.5" x2="403.5" y2="412.5" stroke="#e0e0e0" stroke-width="1.1" />
<line x1="400.5" y1="412.8" x2="406.5" y2="412.8" stroke="#e0e0e0" stroke-width="1.1" />
<path d="M420 406.5 H425.5 L422.75 409.2 Z" fill="#eeeeee" stroke="none" stroke-width="1" />
<line x1="432.5" y1="408.5" x2="438.5" y2="408.5" stroke="#eeeeee" stroke-width="1.6" />
<line x1="449" y1="408.3" x2="540" y2="408.3" stroke="#bbbbbb" stroke-width="1" />
<rect x="444.7" y="403.7" width="4.5" height="10.5" fill="#eeeeee" />
<line x1="491.5" y1="406.5" x2="491.5" y2="410.5" stroke="#888" stroke-width="1" />
<path d="M544.8 408.3 H551.5 M548.15 405 V411.6" fill="none" stroke="#eeeeee" stroke-width="1.7" />
<text x="564" y="412.3" font-size="10" fill="#e8e8e8" textLength="18.5" lengthAdjust="spacingAndGlyphs" stroke="#e8e8e8" stroke-width="0.12" >16%</text>
<rect x="596.5" y="402" width="13" height="13" fill="none" stroke="#d8d8d8" stroke-width="1.1" rx="1.2"/>
<path d="M601.4 405.6 L602.75 403.9 L604.1 405.6 Z M601.4 410.6 L602.75 412.3 L604.1 410.6 Z M600.4 407 L598.7 408.3 L600.4 409.6 Z M605.1 407 L606.8 408.3 L605.1 409.6 Z" fill="#d8d8d8" stroke="none" stroke-width="1" />
</svg>
</body></html>
